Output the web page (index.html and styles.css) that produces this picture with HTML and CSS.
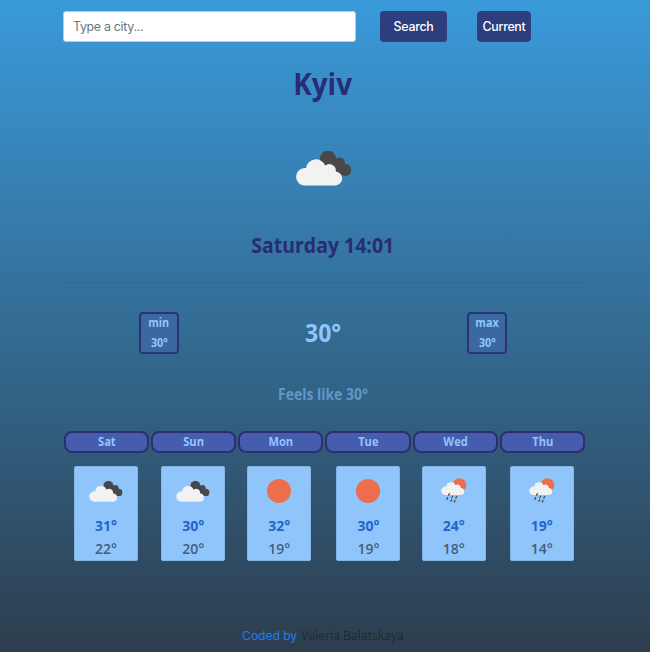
FILE: index.html
```html
<!DOCTYPE html>
<html lang="en">
<head>
<meta charset="utf-8">
<title>Weather</title>
<link rel="stylesheet" href="styles.css">
</head>
<body>
<svg class="defs" width="0" height="0">
  <symbol id="clouds" viewBox="0 0 56 35">
    <g fill="#48484a"><circle cx="32" cy="8" r="8.2"/><circle cx="43.500" cy="12" r="5.500"/><circle cx="49.300" cy="19" r="6"/><path d="M27 8h12l8 16H36z"/></g>
    <path fill="#f2f2f2" d="M9 34.500a8.700 8.700 0 0 1-.5-17.400H10a10 10 0 0 1 19.200-2.500 6.500 6.500 0 0 1 10.600 5.800A7.100 7.100 0 0 1 40 34.500Z"/>
  </symbol>
  <symbol id="rain" viewBox="0 0 26 26">
    <circle cx="18.500" cy="7" r="6.800" fill="#ec6e4c"/>
    <path fill="#f2f2f2" d="M4.500 17a4.300 4.300 0 0 1 0-8.600h.6a5 5 0 0 1 9.500-1.200 3.200 3.200 0 0 1 5.200 2.900 3.500 3.500 0 0 1 .7 6.900Z"/>
    <path d="M8.300 15.800l-.7 1.300M6.600 19.700l-.8 1.700M11.500 18.300l-.6 1.200M10.600 21.700l-.7 1.500M15.600 18.600l-.7 1.500M14 22.300l-.7 1.600" stroke="#48484a" stroke-width="1.300" fill="none" stroke-linecap="round"/>
  </symbol>
</svg>
<main class="app">
  <form class="search">
    <input class="city-input" type="text" placeholder="Type a city...">
    <button class="btn submit" type="button">Search</button>
    <button class="btn current" type="button">Current</button>
  </form>
  <h1 class="city"><span>Kyiv</span></h1>
  <svg class="main-icon"><use href="#clouds"/></svg>
  <h2 class="date"><span>Saturday 14:01</span></h2>
  <hr class="rule">
  <section class="temps">
    <div class="limit"><span>min</span><span>30°</span></div>
    <div class="now"><span>30°</span></div>
    <div class="limit"><span>max</span><span>30°</span></div>
  </section>
  <p class="feels"><span>Feels like 30°</span></p>
  <section class="forecast">
    <div class="day"><div class="name"><span>Sat</span></div><div class="card"><svg class="icon cloud"><use href="#clouds"/></svg><b>31°</b><i>22°</i></div></div>
    <div class="day"><div class="name"><span>Sun</span></div><div class="card"><svg class="icon cloud"><use href="#clouds"/></svg><b>30°</b><i>20°</i></div></div>
    <div class="day"><div class="name"><span>Mon</span></div><div class="card"><div class="icon sun"></div><b>32°</b><i>19°</i></div></div>
    <div class="day"><div class="name"><span>Tue</span></div><div class="card"><div class="icon sun"></div><b>30°</b><i>19°</i></div></div>
    <div class="day"><div class="name"><span>Wed</span></div><div class="card"><svg class="icon showers"><use href="#rain"/></svg><b>24°</b><i>18°</i></div></div>
    <div class="day"><div class="name"><span>Thu</span></div><div class="card"><svg class="icon showers"><use href="#rain"/></svg><b>19°</b><i>14°</i></div></div>
  </section>
  <footer class="credit"><a>Coded by</a> <span>Valeria Balatskaya</span></footer>
</main>
</body>
</html>
```
FILE: styles.css
```css
* { box-sizing: border-box; }
body {
  margin: 0;
  height: 652px;
  overflow: hidden;
  background: linear-gradient(#3a9ada, #2d3e4e);
  font-family: "Open Sans", "Noto Sans", sans-serif;
  font-weight: 700;
}
.defs { display: block; }
.app { width: 521px; margin-left: 64px; display: flex; flex-direction: column; }
.app span, .card b, .card i { display: inline-block; transform: scaleX(.9); }
.search { display: flex; margin-top: 11px; height: 31px; }
.city-input, .btn { font-family: Inter, sans-serif; font-size: 12.400px; border-radius: 3px; letter-spacing: -.3px; }
.city-input {
  width: 293px;
  margin-left: -1px;
  padding: 0 9px;
  background: #fff;
  border: 1px solid #b4cfe4;
}
.city-input::placeholder { color: #6c757d; opacity: 1; }
.btn { padding: 0; border: 1px solid #30417f; background: #2d3e7e; color: #fff; font-weight: 500; height: 31px; }
.submit { width: 67px; margin-left: 24px; }
.current { width: 54px; margin-left: 30px; border-radius: 4px; }
.city, .date, .feels { margin: 0; text-align: center; width: 518px; }
.city { margin-top: 22px; height: 40px; line-height: 40px; font-size: 30px; font-weight: 700; color: #292c72; }
.city span { transform: scaleX(.93); }
.main-icon { width: 56px; height: 35px; margin: 47px 0 0 232px; }
.date { margin-top: 42px; height: 32px; line-height: 32px; font-size: 22px; font-weight: 700; color: #292c72; }
.date span { transform: scaleX(.885); }
.rule { width: 521px; height: 1px; margin: 22px 0 0; border: 0; background: rgba(20, 50, 85, .15); }
.temps { display: flex; justify-content: space-between; align-items: center; width: 368px; height: 42px; margin: 29px 0 0 75px; color: #90c5fb; }
.limit { width: 40px; height: 42px; border: 2px solid #2c3277; border-radius: 4px; background: #3b689f; font-size: 12px; line-height: 20px; display: flex; flex-direction: column; align-items: center; }
.limit span { position: relative; top: -1px; }
.now { font-size: 25.500px; line-height: 32px; margin-bottom: 2px; }
.feels { margin-top: 28px; height: 25px; line-height: 25px; font-size: 15.500px; color: #6098c7; }
.forecast { display: grid; grid-template-columns: repeat(6, 1fr); gap: 2px; margin-top: 24px; }
.name { height: 22px; border: 2px solid #292f70; border-radius: 8px; background: #465cad; color: #90c5fb; font-size: 12.400px; line-height: 18px; text-align: center; }
.card { width: 64px; height: 95px; margin: 13px 0 0 10px; border-radius: 2px; border: 1px solid #84b6e8; background: #90c5fb; display: flex; flex-direction: column; align-items: center; }
.day:nth-child(3) .card, .day:nth-child(5) .card { margin-left: 9px; }
.day:nth-child(4) .card { margin-left: 11px; }
.icon { display: block; flex: none; }
.cloud { width: 34px; height: 21px; margin: 14px 0 12px; }
.sun { width: 24px; height: 24px; margin: 12px 0 11px; border-radius: 50%; background: #ec6e4c; }
.showers { width: 26px; height: 26px; margin: 11px 0 10px; }
.card b, .card i { font-style: normal; font-size: 14px; line-height: 23px; height: 23px; transform: none; }
.card b { color: #2066ca; font-weight: 700; }
.card i { color: #455e7c; font-weight: 600; }
.credit { width: 518px; margin-top: 66px; text-align: center; font-size: 12.200px; line-height: 18px; font-weight: 500; color: #212830; white-space: nowrap; }
.credit span { transform-origin: left; transform: none; margin-left: 1px; }
.credit a { font-family: Inter, sans-serif; font-weight: 400; color: #1b7df0; font-size: 12.200px; letter-spacing: -.1px; }
```
